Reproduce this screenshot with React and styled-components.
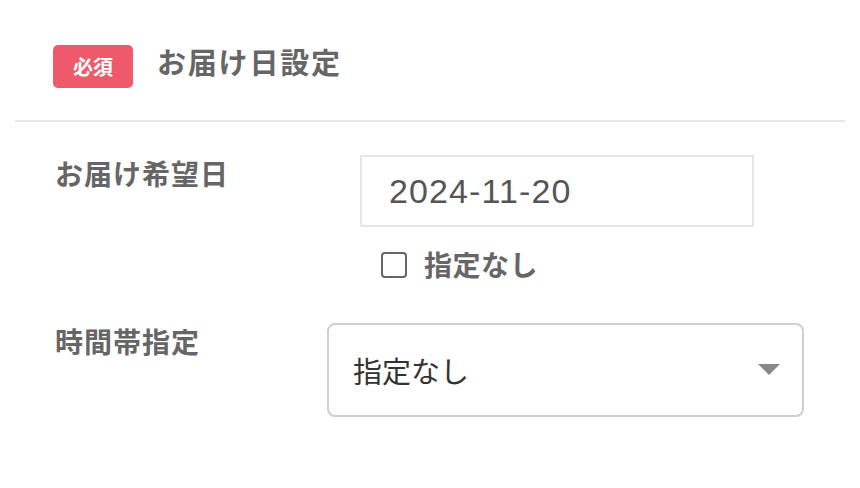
import styled, { createGlobalStyle } from "styled-components";

const GlobalStyle = createGlobalStyle`
  body {
    margin: 0;
    background: #fff;
    font-family: "Noto Sans CJK JP", "Noto Sans", sans-serif;
  }
`;

const Page = styled.div`
  padding: 0 15px;
  width: 830px;
`;

const Header = styled.div`
  display: flex;
  align-items: center;
  gap: 24px;
  padding: 45px 38px 32px;
  border-bottom: 2px solid #e8e8e8;
`;

const Badge = styled.span`
  display: flex;
  align-items: center;
  justify-content: center;
  width: 80px;
  height: 43px;
  border-radius: 5px;
  background: #ee5a6b;
  color: #fff;
  font-size: 20px;
  font-weight: 700;
`;

const Title = styled.h2`
  margin: 0 0 10px;
  font-size: 29px;
  line-height: 1;
  font-weight: 700;
  letter-spacing: 1.8px;
  color: #666;
`;

const Form = styled.div`
  display: grid;
  grid-template-columns: 272px 477px;
  row-gap: 41px;
  padding: 33px 0 0 40px;
`;

const Label = styled.div`
  padding-top: 2px;
  font-size: 28px;
  line-height: 1.2;
  font-weight: 700;
  letter-spacing: 1px;
  color: #666;
`;

const DateBox = styled.div`
  display: flex;
  flex-direction: column;
  padding-left: 33px;
`;

const DateInput = styled.input`
  box-sizing: border-box;
  width: 394px;
  height: 72px;
  padding: 0 0 0 27px;
  border: 2px solid #e6e6e6;
  border-radius: 0;
  font-family: "Liberation Sans", Arial, sans-serif;
  font-size: 34px;
  letter-spacing: 1.1px;
  color: #555;
  outline: none;
`;

const CheckRow = styled.label`
  display: flex;
  align-items: center;
  gap: 17px;
  margin-top: 21px;
  padding-left: 21px;
  font-size: 28px;
  line-height: 1.2;
  font-weight: 700;
  letter-spacing: 0.5px;
  color: #666;
`;

const CheckBox = styled.span`
  box-sizing: border-box;
  width: 26px;
  height: 26px;
  border: 2px solid #666;
  border-radius: 4px;
  background: #fff;
`;

const SelectBox = styled.div`
  box-sizing: border-box;
  display: flex;
  align-items: center;
  justify-content: space-between;
  height: 94px;
  padding: 0 22px 0 24px;
  border: 2px solid #cfcfcf;
  border-radius: 8px;
  font-size: 29px;
  color: #333;
`;

const Arrow = () => (
  <svg width="22" height="11" viewBox="0 0 22 11">
    <path d="M0 0 H22 L11 11 Z" fill="#888" />
  </svg>
);

export default function App() {
  return (
    <Page>
      <GlobalStyle />
      <Header>
        <Badge>必須</Badge>
        <Title>お届け日設定</Title>
      </Header>
      <Form>
        <Label>お届け希望日</Label>
        <DateBox>
          <DateInput type="text" value="2024-11-20" readOnly />
          <CheckRow>
            <CheckBox />
            指定なし
          </CheckRow>
        </DateBox>
        <Label>時間帯指定</Label>
        <SelectBox>
          <span>指定なし</span>
          <Arrow />
        </SelectBox>
      </Form>
    </Page>
  );
}
